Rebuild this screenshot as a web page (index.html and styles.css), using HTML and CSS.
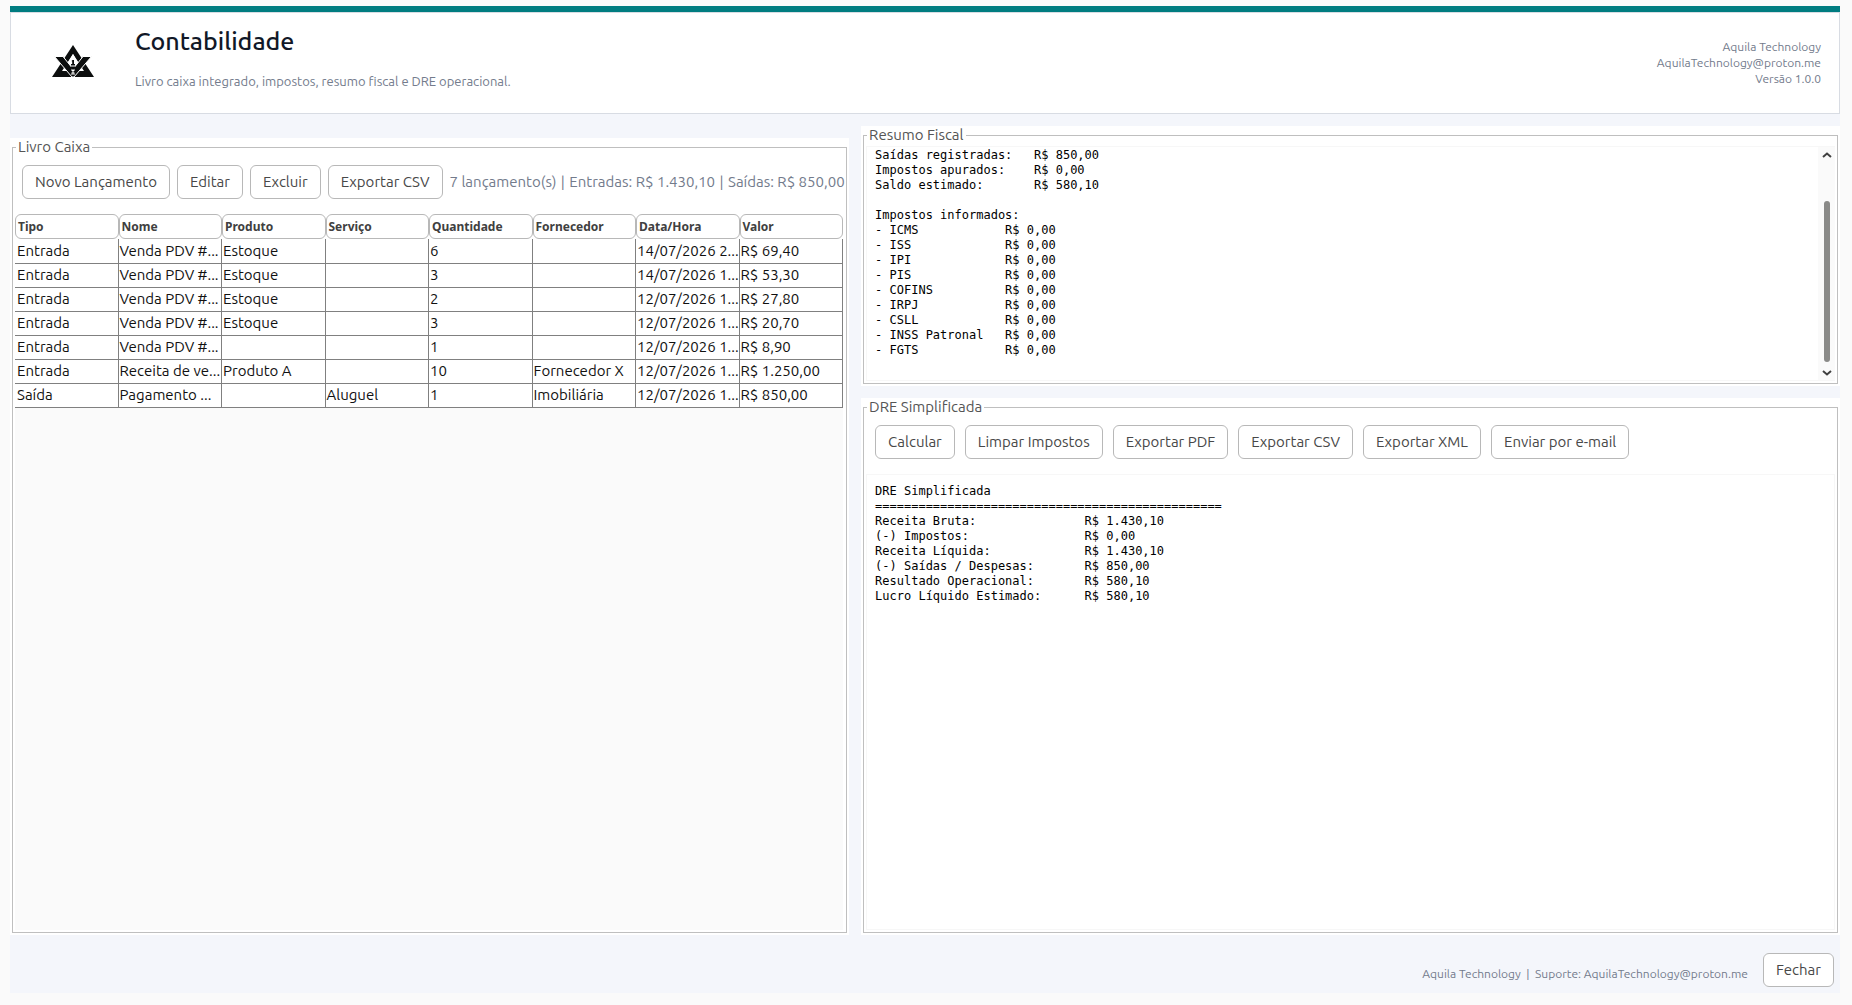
FILE: index.html
```html
<!DOCTYPE html>
<html lang="pt-BR">
<head>
<meta charset="utf-8">
<title>Contabilidade</title>
<link rel="stylesheet" href="styles.css">
</head>
<body>
<div class="window">
  <header class="header">
    <svg class="logo" viewBox="0 0 42 32" aria-hidden="true">
      <path fill="#0c0e0e" fill-rule="evenodd" d="M21 0 42 32H0ZM21 9 10 26H32Z"/>
      <path fill="#0c0e0e" stroke="#fff" stroke-width="1" d="M2.500 11.500H11L21 24 31 11.500H39.500L22 32H20Z"/>
      <path fill="#fff" d="M21 9 25.500 16.500 22.500 21V30H19.500V21L16.500 16.500Z"/>
      <path fill="#0c0e0e" d="M19.500 16l1-1h1.500v4h1v1.500h-4V19h1.200v-2.500zM19 21.500h4v2l-1 1h-2l-1-1zM19 26h1.500v1.500H19zM21.500 26H23v1.500h-1.500zM20.500 28.500h1V31h-1z"/>
    </svg>
    <div class="heading">
      <h1>Contabilidade</h1>
      <p>Livro caixa integrado, impostos, resumo fiscal e DRE operacional.</p>
    </div>
    <address class="about">Aquila Technology<br>AquilaTechnology@proton.me<br>Versão 1.0.0</address>
  </header>

  <main class="columns">
    <section class="panel ledger">
      <fieldset>
        <legend>Livro Caixa</legend>
        <div class="toolbar">
          <button type="button">Novo Lançamento</button>
          <button type="button">Editar</button>
          <button type="button">Excluir</button>
          <button type="button">Exportar CSV</button>
          <p class="totals">7 lançamento(s) <span>|</span> Entradas: R$ 1.430,10 <span>|</span> Saídas: R$ 850,00</p>
        </div>
        <div class="table-view">
          <table>
            <thead>
              <tr><th>Tipo</th><th>Nome</th><th>Produto</th><th>Serviço</th><th>Quantidade</th><th>Fornecedor</th><th>Data/Hora</th><th>Valor</th></tr>
            </thead>
            <tbody>
              <tr><td>Entrada</td><td>Venda PDV #...</td><td>Estoque</td><td></td><td>6</td><td></td><td>14/07/2026 2...</td><td>R$ 69,40</td></tr>
              <tr><td>Entrada</td><td>Venda PDV #...</td><td>Estoque</td><td></td><td>3</td><td></td><td>14/07/2026 1...</td><td>R$ 53,30</td></tr>
              <tr><td>Entrada</td><td>Venda PDV #...</td><td>Estoque</td><td></td><td>2</td><td></td><td>12/07/2026 1...</td><td>R$ 27,80</td></tr>
              <tr><td>Entrada</td><td>Venda PDV #...</td><td>Estoque</td><td></td><td>3</td><td></td><td>12/07/2026 1...</td><td>R$ 20,70</td></tr>
              <tr><td>Entrada</td><td>Venda PDV #...</td><td></td><td></td><td>1</td><td></td><td>12/07/2026 1...</td><td>R$ 8,90</td></tr>
              <tr><td>Entrada</td><td>Receita de ve...</td><td>Produto A</td><td></td><td>10</td><td>Fornecedor X</td><td>12/07/2026 1...</td><td>R$ 1.250,00</td></tr>
              <tr><td>Saída</td><td>Pagamento ...</td><td></td><td>Aluguel</td><td>1</td><td>Imobiliária</td><td>12/07/2026 1...</td><td>R$ 850,00</td></tr>
            </tbody>
          </table>
        </div>
      </fieldset>
    </section>

    <div class="reports">
      <section class="panel">
        <fieldset>
          <legend>Resumo Fiscal</legend>
          <div class="text-view summary">
<pre>Saídas registradas:   R$ 850,00
Impostos apurados:    R$ 0,00
Saldo estimado:       R$ 580,10

Impostos informados:
- ICMS            R$ 0,00
- ISS             R$ 0,00
- IPI             R$ 0,00
- PIS             R$ 0,00
- COFINS          R$ 0,00
- IRPJ            R$ 0,00
- CSLL            R$ 0,00
- INSS Patronal   R$ 0,00
- FGTS            R$ 0,00</pre>
            <div class="scrollbar" aria-hidden="true">
              <svg viewBox="0 0 10 6"><path d="M1 5 5 1.500 9 5"/></svg>
              <div class="track"><div class="thumb"></div></div>
              <svg viewBox="0 0 10 6"><path d="M1 1 5 4.500 9 1"/></svg>
            </div>
          </div>
        </fieldset>
      </section>

      <section class="panel">
        <fieldset>
          <legend>DRE Simplificada</legend>
          <div class="toolbar wide">
            <button type="button">Calcular</button>
            <button type="button">Limpar Impostos</button>
            <button type="button">Exportar PDF</button>
            <button type="button">Exportar CSV</button>
            <button type="button">Exportar XML</button>
            <button type="button">Enviar por e-mail</button>
          </div>
          <div class="text-view statement">
<pre>DRE Simplificada
================================================
Receita Bruta:               R$ 1.430,10
(-) Impostos:                R$ 0,00
Receita Líquida:             R$ 1.430,10
(-) Saídas / Despesas:       R$ 850,00
Resultado Operacional:       R$ 580,10
Lucro Líquido Estimado:      R$ 580,10</pre>
          </div>
        </fieldset>
      </section>
    </div>
  </main>

  <footer class="footer">
    <span>Aquila Technology &nbsp;|&nbsp; Suporte: AquilaTechnology@proton.me</span>
    <button type="button">Fechar</button>
  </footer>
</div>
</body>
</html>
```
FILE: styles.css
```css
* { box-sizing: border-box; }

body {
  margin: 0;
  padding: 6px 12px 12px 10px;
  min-height: 100vh;
  display: flex;
  background: #fafafa;
  color: #404040;
  font: 15px/18px Ubuntu, "Noto Sans", sans-serif;
}

.window {
  flex: 1;
  min-width: 0;
  display: flex;
  flex-direction: column;
  background: #f4f6fb;
  border-top: 6px solid #007c80;
}

.header {
  display: flex;
  align-items: center;
  min-height: 102px;
  padding: 0 18px 4px 41px;
  background: #fff;
  border: 1px solid #d8dce3;
}

.logo { width: 42px; height: 32px; }

.heading {
  flex: 1;
  margin-left: 41px;
  padding-bottom: 8px;
}

h1 {
  margin: 0 0 16px;
  color: #111827;
  font-size: 25px;
  line-height: 32px;
  font-weight: 500;
}

.heading p {
  margin: 0;
  color: #737b8c;
  font-size: 13px;
  line-height: 16px;
}

.about {
  padding-top: 4px;
  color: #737b8c;
  font-size: 12px;
  line-height: 16px;
  font-style: normal;
  text-align: right;
}

.columns {
  flex: 1;
  display: grid;
  grid-template-columns: 6fr 7fr;
  gap: 12px;
  padding-top: 12px;
}

.reports {
  display: grid;
  grid-template-rows: auto 1fr;
  gap: 12px;
  min-width: 0;
}

.panel {
  display: flex;
  min-width: 0;
  padding: 0 2px 2px;
  background: #fff;
}

.ledger { margin-top: 12px; }

fieldset {
  flex: 1;
  min-width: 0;
  margin: 0;
  padding: 2px;
  display: flex;
  flex-direction: column;
  border: 1px solid #bfbfbf;
}

legend {
  margin-left: 1px;
  padding: 0 2px;
  color: #555;
}

.toolbar {
  display: flex;
  align-items: center;
  gap: 7px;
  padding: 7px 0 15px 7px;
}

.toolbar.wide {
  gap: 10px;
  padding-left: 9px;
}

button {
  height: 34px;
  padding: 0 12px;
  border: 1px solid #b8b8b8;
  border-radius: 6px;
  background: #fff;
  color: #484848;
  font: inherit;
  white-space: nowrap;
}

.totals {
  margin: 0;
  color: #737b8c;
  white-space: nowrap;
}

.totals span { margin: 0 1px; }

.table-view {
  flex: 1;
  margin-right: 1px;
  background: #fafafa;
}

table {
  width: 100%;
  table-layout: fixed;
  border-collapse: separate;
  border-spacing: 0;
  background: #fff;
}

th {
  height: 25px;
  padding: 0 2px;
  border: 1px solid #b8b8b8;
  border-radius: 6px;
  font-family: "Noto Sans", sans-serif;
  font-size: 12px;
  line-height: 16px;
  text-align: left;
}

td {
  height: 24px;
  padding: 0 1px 1px;
  border-right: 1px solid #808080;
  border-bottom: 1px solid #808080;
  color: #111;
  white-space: nowrap;
  overflow: hidden;
}

td:first-child { padding-left: 2px; }

tbody tr:first-child td { padding-top: 1px; height: 25px; }

.text-view {
  flex: 1;
  display: flex;
  border: 1px solid #f7f7f7;
}

pre {
  flex: 1;
  margin: 0;
  color: #000;
  font: 12px/15px "DejaVu Sans Mono", monospace;
}

.summary { border-right: 0; }
.summary pre { padding: 1px 8px 22px; }
.statement pre { padding: 9px 8px; }

.scrollbar {
  width: 17px;
  padding: 5px 0 4px;
  display: flex;
  flex-direction: column;
  align-items: center;
  background: #fafafa;
}

.scrollbar svg {
  width: 10px;
  height: 6px;
  fill: none;
  stroke: #404040;
  stroke-width: 2;
}

.track {
  flex: 1;
  display: flex;
  align-items: flex-end;
  padding: 8px 0;
}

.thumb {
  width: 6px;
  height: 82%;
  border-radius: 3px;
  background: #8a8a88;
}

.footer {
  display: flex;
  align-items: center;
  justify-content: flex-end;
  gap: 15px;
  padding: 18px 6px 6px;
}

.footer span {
  padding-top: 8px;
  color: #737b8c;
  font-size: 12px;
  line-height: 16px;
}
```
